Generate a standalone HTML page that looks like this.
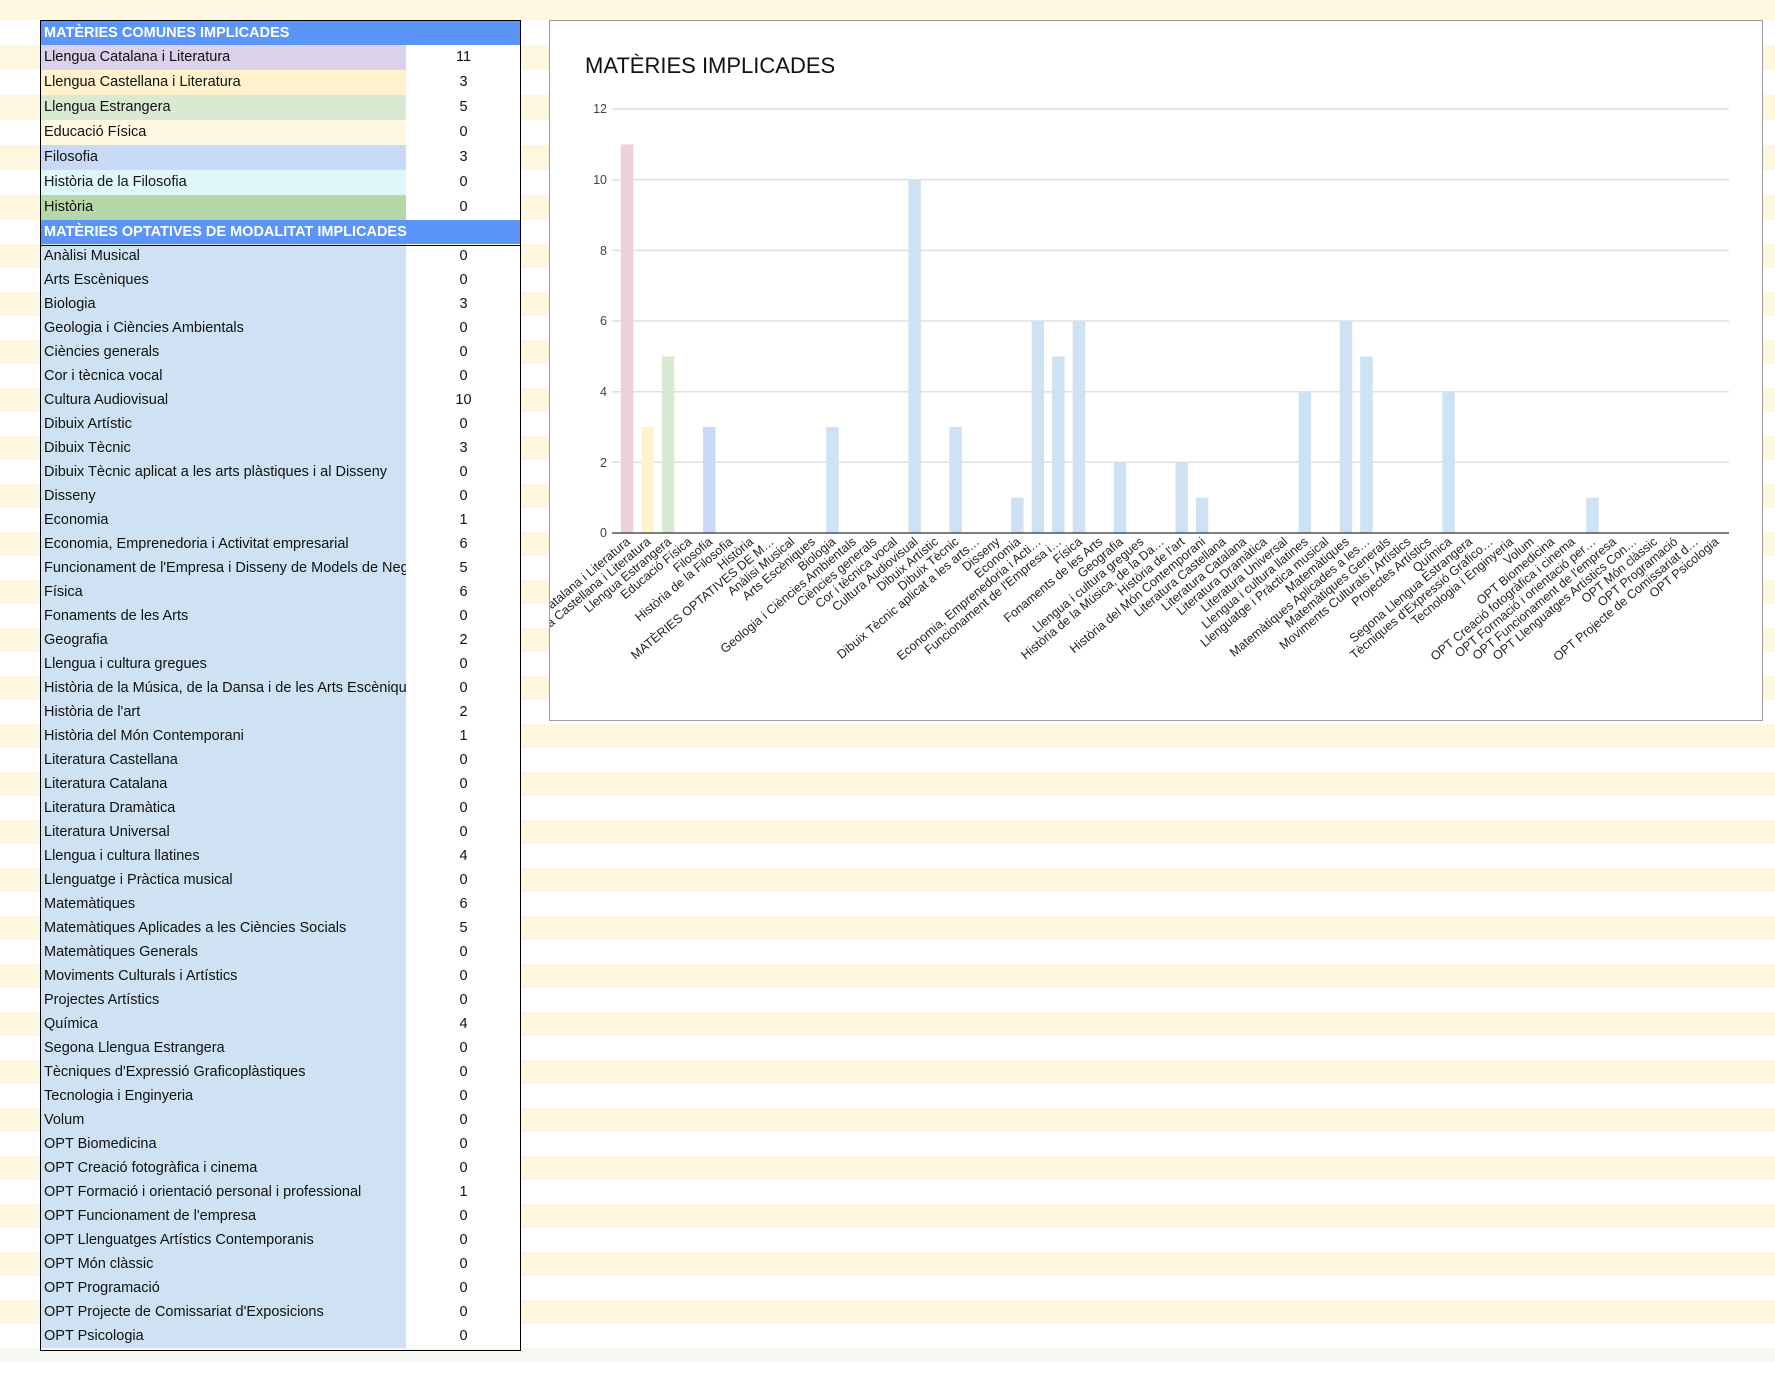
<!DOCTYPE html>
<html><head><meta charset="utf-8"><style>
body{margin:0;width:1775px;height:1376px;background:#fff;font-family:"Liberation Sans",Arial,sans-serif;position:relative;overflow:hidden}
.top{height:20px;background:#fef7e0}
.r{position:relative;height:24px;width:1775px}
.r.h25{height:25px}
.c{background:#fef7e0}
.l{position:absolute;left:40px;width:362px;height:100%;padding-left:4px;font-size:14.5px;line-height:24px;white-space:nowrap;overflow:hidden;color:#111}
.v{position:absolute;left:406px;width:115px;height:100%;background:#fff;text-align:center;font-size:14.5px;line-height:24px;color:#111}
.h .l{width:477px;background:#5b95f9;color:#fff;font-weight:bold;font-size:14.5px}
.b .l{background:#cfe2f3}
.box{position:absolute;left:40px;top:20px;width:481px;height:1331px;border:1px solid #000;box-sizing:border-box}
.sep{position:absolute;left:40px;top:245px;width:481px;height:1px;background:#000}
.gray{height:14px;background:#f5f7f2}
svg{position:absolute;left:0;top:0}
</style></head><body>
<div class="top"></div>
<div class="r h h25"><div class="l" style="line-height:26px;height:26px">MATÈRIES COMUNES IMPLICADES</div></div>
<div class="r h25 c"><div class="l" style="background:#d9d2e9">Llengua Catalana i Literatura</div><div class="v">11</div></div>
<div class="r h25"><div class="l" style="background:#fff2cc">Llengua Castellana i Literatura</div><div class="v">3</div></div>
<div class="r h25 c"><div class="l" style="background:#d9ead3">Llengua Estrangera</div><div class="v">5</div></div>
<div class="r h25"><div class="l" style="background:#fff8e1">Educació Física</div><div class="v">0</div></div>
<div class="r h25 c"><div class="l" style="background:#c9daf8">Filosofia</div><div class="v">3</div></div>
<div class="r h25"><div class="l" style="background:#e0f7fa">Història de la Filosofia</div><div class="v">0</div></div>
<div class="r h25 c"><div class="l" style="background:#b6d7a8">Història</div><div class="v">0</div></div>
<div class="r h"><div class="l">MATÈRIES OPTATIVES DE MODALITAT IMPLICADES</div></div>
<div class="r b c"><div class="l">Anàlisi Musical</div><div class="v">0</div></div>
<div class="r b"><div class="l">Arts Escèniques</div><div class="v">0</div></div>
<div class="r b c"><div class="l">Biologia</div><div class="v">3</div></div>
<div class="r b"><div class="l">Geologia i Ciències Ambientals</div><div class="v">0</div></div>
<div class="r b c"><div class="l">Ciències generals</div><div class="v">0</div></div>
<div class="r b"><div class="l">Cor i tècnica vocal</div><div class="v">0</div></div>
<div class="r b c"><div class="l">Cultura Audiovisual</div><div class="v">10</div></div>
<div class="r b"><div class="l">Dibuix Artístic</div><div class="v">0</div></div>
<div class="r b c"><div class="l">Dibuix Tècnic</div><div class="v">3</div></div>
<div class="r b"><div class="l">Dibuix Tècnic aplicat a les arts plàstiques i al Disseny</div><div class="v">0</div></div>
<div class="r b c"><div class="l">Disseny</div><div class="v">0</div></div>
<div class="r b"><div class="l">Economia</div><div class="v">1</div></div>
<div class="r b c"><div class="l">Economia, Emprenedoria i Activitat empresarial</div><div class="v">6</div></div>
<div class="r b"><div class="l">Funcionament de l'Empresa i Disseny de Models de Negoci</div><div class="v">5</div></div>
<div class="r b c"><div class="l">Física</div><div class="v">6</div></div>
<div class="r b"><div class="l">Fonaments de les Arts</div><div class="v">0</div></div>
<div class="r b c"><div class="l">Geografia</div><div class="v">2</div></div>
<div class="r b"><div class="l">Llengua i cultura gregues</div><div class="v">0</div></div>
<div class="r b c"><div class="l">Història de la Música, de la Dansa i de les Arts Escèniques</div><div class="v">0</div></div>
<div class="r b"><div class="l">Història de l'art</div><div class="v">2</div></div>
<div class="r b c"><div class="l">Història del Món Contemporani</div><div class="v">1</div></div>
<div class="r b"><div class="l">Literatura Castellana</div><div class="v">0</div></div>
<div class="r b c"><div class="l">Literatura Catalana</div><div class="v">0</div></div>
<div class="r b"><div class="l">Literatura Dramàtica</div><div class="v">0</div></div>
<div class="r b c"><div class="l">Literatura Universal</div><div class="v">0</div></div>
<div class="r b"><div class="l">Llengua i cultura llatines</div><div class="v">4</div></div>
<div class="r b c"><div class="l">Llenguatge i Pràctica musical</div><div class="v">0</div></div>
<div class="r b"><div class="l">Matemàtiques</div><div class="v">6</div></div>
<div class="r b c"><div class="l">Matemàtiques Aplicades a les Ciències Socials</div><div class="v">5</div></div>
<div class="r b"><div class="l">Matemàtiques Generals</div><div class="v">0</div></div>
<div class="r b c"><div class="l">Moviments Culturals i Artístics</div><div class="v">0</div></div>
<div class="r b"><div class="l">Projectes Artístics</div><div class="v">0</div></div>
<div class="r b c"><div class="l">Química</div><div class="v">4</div></div>
<div class="r b"><div class="l">Segona Llengua Estrangera</div><div class="v">0</div></div>
<div class="r b c"><div class="l">Tècniques d'Expressió Graficoplàstiques</div><div class="v">0</div></div>
<div class="r b"><div class="l">Tecnologia i Enginyeria</div><div class="v">0</div></div>
<div class="r b c"><div class="l">Volum</div><div class="v">0</div></div>
<div class="r b"><div class="l">OPT Biomedicina</div><div class="v">0</div></div>
<div class="r b c"><div class="l">OPT Creació fotogràfica i cinema</div><div class="v">0</div></div>
<div class="r b"><div class="l">OPT Formació i orientació personal i professional</div><div class="v">1</div></div>
<div class="r b c"><div class="l">OPT Funcionament de l'empresa</div><div class="v">0</div></div>
<div class="r b"><div class="l">OPT Llenguatges Artístics Contemporanis</div><div class="v">0</div></div>
<div class="r b c"><div class="l">OPT Món clàssic</div><div class="v">0</div></div>
<div class="r b"><div class="l">OPT Programació</div><div class="v">0</div></div>
<div class="r b c"><div class="l">OPT Projecte de Comissariat d'Exposicions</div><div class="v">0</div></div>
<div class="r b"><div class="l">OPT Psicologia</div><div class="v">0</div></div>
<div class="gray"></div>
<div class="box"></div>
<div class="sep"></div>

<svg width="1775" height="1376" viewBox="0 0 1775 1376" font-family="Liberation Sans, Arial, sans-serif">
<defs><clipPath id="cp"><rect x="550" y="21" width="1212" height="699"/></clipPath></defs>
<rect x="549.5" y="20.5" width="1213" height="700" fill="#fff" stroke="#9e9e9e"/>
<text x="585" y="73" font-size="22" fill="#111">MATÈRIES IMPLICADES</text>
<g stroke="#e0e0e0" stroke-width="1.5">
<line x1="612" x2="1729" y1="109" y2="109"/><line x1="612" x2="1729" y1="179.7" y2="179.7"/><line x1="612" x2="1729" y1="250.4" y2="250.4"/><line x1="612" x2="1729" y1="321" y2="321"/><line x1="612" x2="1729" y1="391.7" y2="391.7"/><line x1="612" x2="1729" y1="462.3" y2="462.3"/>
</g>
<g font-size="12.5" fill="#444" text-anchor="end">
<text x="607" y="113">12</text><text x="607" y="184">10</text><text x="607" y="255">8</text><text x="607" y="325">6</text><text x="607" y="396">4</text><text x="607" y="467">2</text><text x="607" y="537">0</text>
</g>
<g>
<rect x="620.8" y="144.4" width="12.5" height="388.6" fill="#ead1dc"/>
<rect x="641.3" y="427" width="12.5" height="106" fill="#fff2cc"/>
<rect x="661.9" y="356.4" width="12.5" height="176.6" fill="#d9ead3"/>
<rect x="703" y="427" width="12.5" height="106" fill="#c9daf8"/>
<g fill="#cfe2f3">
<rect x="826.2" y="427" width="12.5" height="106"/>
<rect x="908.4" y="179.7" width="12.5" height="353.3"/>
<rect x="949.4" y="427" width="12.5" height="106"/>
<rect x="1011.1" y="497.7" width="12.5" height="35.3"/>
<rect x="1031.6" y="321" width="12.5" height="212"/>
<rect x="1052.1" y="356.4" width="12.5" height="176.6"/>
<rect x="1072.7" y="321" width="12.5" height="212"/>
<rect x="1113.8" y="462.3" width="12.5" height="70.7"/>
<rect x="1175.4" y="462.3" width="12.5" height="70.7"/>
<rect x="1195.9" y="497.7" width="12.5" height="35.3"/>
<rect x="1298.6" y="391.7" width="12.5" height="141.3"/>
<rect x="1339.7" y="321" width="12.5" height="212"/>
<rect x="1360.2" y="356.4" width="12.5" height="176.6"/>
<rect x="1442.4" y="391.7" width="12.5" height="141.3"/>
<rect x="1586.2" y="497.7" width="12.5" height="35.3"/>
</g>
</g>
<line x1="612" x2="1729" y1="533" y2="533" stroke="#333" stroke-width="1.2"/>
<g font-size="12.5" fill="#222" text-anchor="end" clip-path="url(#cp)">
<text transform="translate(631,543) rotate(-40)">Llengua Catalana i Literatura</text>
<text transform="translate(651.5,543) rotate(-40)">Llengua Castellana i Literatura</text>
<text transform="translate(672.1,543) rotate(-40)">Llengua Estrangera</text>
<text transform="translate(692.6,543) rotate(-40)">Educació Física</text>
<text transform="translate(713.2,543) rotate(-40)">Filosofia</text>
<text transform="translate(733.7,543) rotate(-40)">Història de la Filosofia</text>
<text transform="translate(754.2,543) rotate(-40)">Història</text>
<text transform="translate(774.8,543) rotate(-40)">MATÈRIES OPTATIVES DE M…</text>
<text transform="translate(795.3,543) rotate(-40)">Anàlisi Musical</text>
<text transform="translate(815.9,543) rotate(-40)">Arts Escèniques</text>
<text transform="translate(836.4,543) rotate(-40)">Biologia</text>
<text transform="translate(856.9,543) rotate(-40)">Geologia i Ciències Ambientals</text>
<text transform="translate(877.5,543) rotate(-40)">Ciències generals</text>
<text transform="translate(898,543) rotate(-40)">Cor i tècnica vocal</text>
<text transform="translate(918.6,543) rotate(-40)">Cultura Audiovisual</text>
<text transform="translate(939.1,543) rotate(-40)">Dibuix Artístic</text>
<text transform="translate(959.6,543) rotate(-40)">Dibuix Tècnic</text>
<text transform="translate(980.2,543) rotate(-40)">Dibuix Tècnic aplicat a les arts…</text>
<text transform="translate(1000.7,543) rotate(-40)">Disseny</text>
<text transform="translate(1021.3,543) rotate(-40)">Economia</text>
<text transform="translate(1041.8,543) rotate(-40)">Economia, Emprenedoria i Acti…</text>
<text transform="translate(1062.3,543) rotate(-40)">Funcionament de l'Empresa i…</text>
<text transform="translate(1082.9,543) rotate(-40)">Física</text>
<text transform="translate(1103.4,543) rotate(-40)">Fonaments de les Arts</text>
<text transform="translate(1124,543) rotate(-40)">Geografia</text>
<text transform="translate(1144.5,543) rotate(-40)">Llengua i cultura gregues</text>
<text transform="translate(1165,543) rotate(-40)">Història de la Música, de la Da…</text>
<text transform="translate(1185.6,543) rotate(-40)">Història de l'art</text>
<text transform="translate(1206.1,543) rotate(-40)">Història del Món Contemporani</text>
<text transform="translate(1226.7,543) rotate(-40)">Literatura Castellana</text>
<text transform="translate(1247.2,543) rotate(-40)">Literatura Catalana</text>
<text transform="translate(1267.7,543) rotate(-40)">Literatura Dramàtica</text>
<text transform="translate(1288.3,543) rotate(-40)">Literatura Universal</text>
<text transform="translate(1308.8,543) rotate(-40)">Llengua i cultura llatines</text>
<text transform="translate(1329.4,543) rotate(-40)">Llenguatge i Pràctica musical</text>
<text transform="translate(1349.9,543) rotate(-40)">Matemàtiques</text>
<text transform="translate(1370.4,543) rotate(-40)">Matemàtiques Aplicades a les…</text>
<text transform="translate(1391,543) rotate(-40)">Matemàtiques Generals</text>
<text transform="translate(1411.5,543) rotate(-40)">Moviments Culturals i Artístics</text>
<text transform="translate(1432.1,543) rotate(-40)">Projectes Artístics</text>
<text transform="translate(1452.6,543) rotate(-40)">Química</text>
<text transform="translate(1473.1,543) rotate(-40)">Segona Llengua Estrangera</text>
<text transform="translate(1493.7,543) rotate(-40)">Tècniques d'Expressió Grafico…</text>
<text transform="translate(1514.2,543) rotate(-40)">Tecnologia i Enginyeria</text>
<text transform="translate(1534.8,543) rotate(-40)">Volum</text>
<text transform="translate(1555.3,543) rotate(-40)">OPT Biomedicina</text>
<text transform="translate(1575.8,543) rotate(-40)">OPT Creació fotogràfica i cinema</text>
<text transform="translate(1596.4,543) rotate(-40)">OPT Formació i orientació per…</text>
<text transform="translate(1616.9,543) rotate(-40)">OPT Funcionament de l'empresa</text>
<text transform="translate(1637.5,543) rotate(-40)">OPT Llenguatges Artístics Con…</text>
<text transform="translate(1658,543) rotate(-40)">OPT Món clàssic</text>
<text transform="translate(1678.5,543) rotate(-40)">OPT Programació</text>
<text transform="translate(1699.1,543) rotate(-40)">OPT Projecte de Comissariat d…</text>
<text transform="translate(1719.6,543) rotate(-40)">OPT Psicologia</text>
</g>
</svg>
</body></html>
